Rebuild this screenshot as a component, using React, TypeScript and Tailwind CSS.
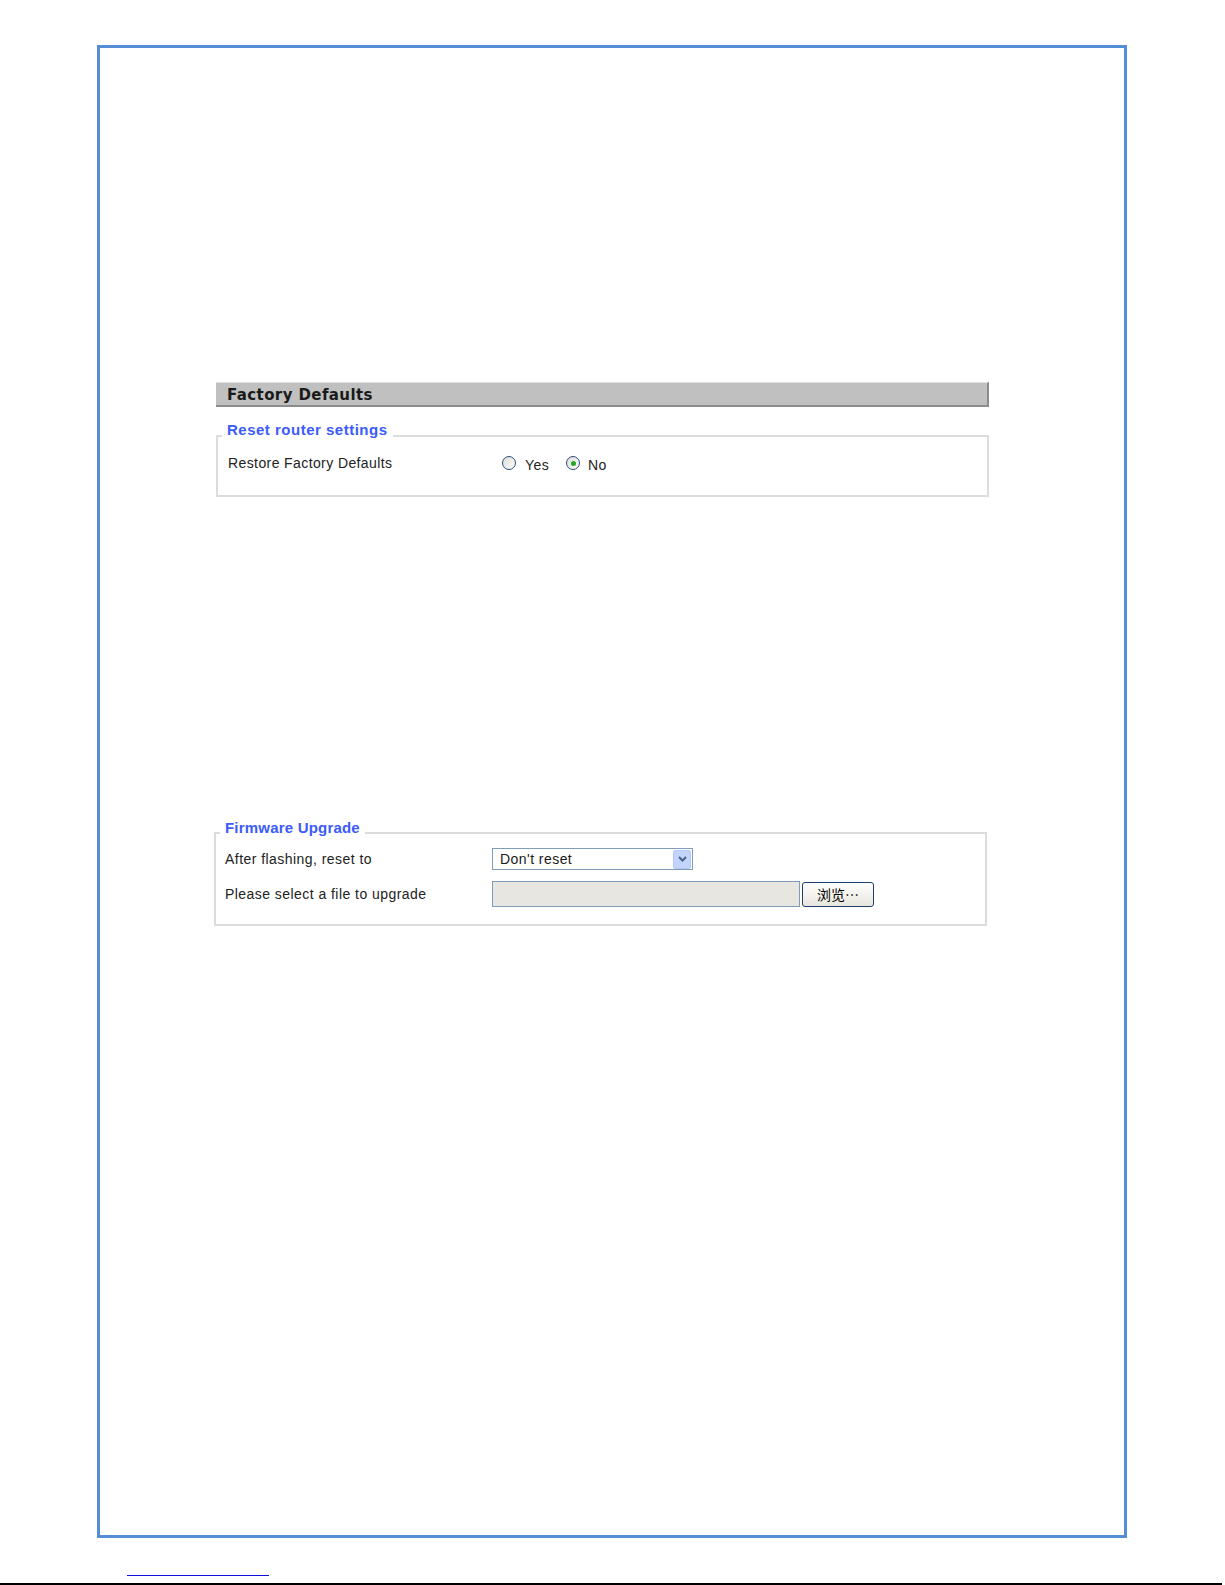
export default function App() {
  const body = { fontFamily: '"Liberation Sans", Arial, sans-serif' }
  const cjk = { fontFamily: '"Noto Sans CJK SC", "Liberation Sans", sans-serif' }

  return (
    <div className="min-h-[1585px] bg-white text-[#222]" style={body}>
      <div className="ml-[97px] mt-[45px] w-[1030px] h-[1493px] border-[3px] border-[#558ed5]">
        <div className="pl-[116px] pt-[334px]">
          {/* header bar */}
          <div
            className="w-[773px] h-[25px] bg-[#c0c0c0] border-t border-t-[#e0e0e0] border-b-2 border-r-2 border-[#8c8c8c] pl-[11px] pt-[2px] text-[15px] font-bold leading-[20px] tracking-[0.4px] text-[#1a1a1a]"
            style={{ fontFamily: '"DejaVu Sans", Verdana, sans-serif' }}
          >
            Factory Defaults
          </div>

          <fieldset className="mt-[14px] w-[773px] border-2 border-[#dcdcdc] pl-[4px] pr-[4px] pb-[23px]">
            <legend className="px-[5px] pb-[12px] text-[15px] font-bold leading-[18px] tracking-[0.5px] text-[#3b5bfb]">
              Reset router settings
            </legend>
            <div className="flex items-center pl-[6px] pt-[3px] h-[21px] text-[14px] leading-[18px] tracking-[0.4px]">
              <div className="w-[274px]">Restore Factory Defaults</div>
              <label className="flex items-center">
                <Radio checked={false} />
                <span className="ml-[9px] mt-[4px]">Yes</span>
              </label>
              <label className="flex items-center ml-[17px]">
                <Radio checked />
                <span className="ml-[8px] mt-[4px]">No</span>
              </label>
            </div>
          </fieldset>

          <fieldset className="mt-[322px] -ml-[2px] w-[773px] border-2 border-[#dcdcdc] pl-[4px] pr-[4px] pb-[17px]">
            <legend className="px-[5px] pb-[10px] text-[15px] font-bold leading-[18px] tracking-[0.2px] text-[#3b5bfb]">
              Firmware Upgrade
            </legend>
            <div className="flex flex-col gap-[11px] pl-[5px] pt-[1px] text-[14px] leading-[18px] tracking-[0.45px]">
              <div className="flex items-center h-[22px]">
                <div className="w-[267px]">After flashing, reset to</div>
                <div className="flex items-center w-[201px] h-[22px] border border-[#7f9db9] bg-white">
                  <span className="flex-1 pl-[7px] text-[#1a1a1a]">Don't reset</span>
                  <span className="mr-px w-[18px] h-[19px] rounded-[2px] border border-[#b4c8f6] bg-[#c3d4fc] flex items-center justify-center">
                    <svg width="9" height="6" viewBox="0 0 9 6">
                      <path d="M1 1l3.5 3.5L8 1" fill="none" stroke="#4d6185" strokeWidth="2" />
                    </svg>
                  </span>
                </div>
              </div>
              <div className="flex items-center h-[26px]">
                <div className="w-[267px]">Please select a file to upgrade</div>
                <div className="w-[308px] h-[26px] border border-[#7f9db9] bg-[#e7e6e1]" />
                <button
                  className="ml-[2px] w-[72px] h-[25px] rounded-[3px] border border-[#1c3f72] bg-gradient-to-b from-white to-[#e8e6dc] text-[14px] leading-[20px] tracking-normal text-black"
                  style={cjk}
                  lang="zh-CN"
                >
                  浏览…
                </button>
              </div>
            </div>
          </fieldset>
        </div>
      </div>

      <div className="mt-[37px] ml-[127px] w-[142px] h-px bg-[#1010e0]" />
      <div className="mt-[7px] w-[1222px] h-[2px] bg-black" />
    </div>
  )
}

function Radio({ checked }: { checked: boolean }) {
  return (
    <span className="w-[14px] h-[14px] rounded-full border border-[#2a4e7a] bg-gradient-to-br from-[#dcdcd6] to-white flex items-center justify-center">
      {checked && <span className="w-[5px] h-[5px] rounded-full bg-[#25a825]" />}
    </span>
  )
}
